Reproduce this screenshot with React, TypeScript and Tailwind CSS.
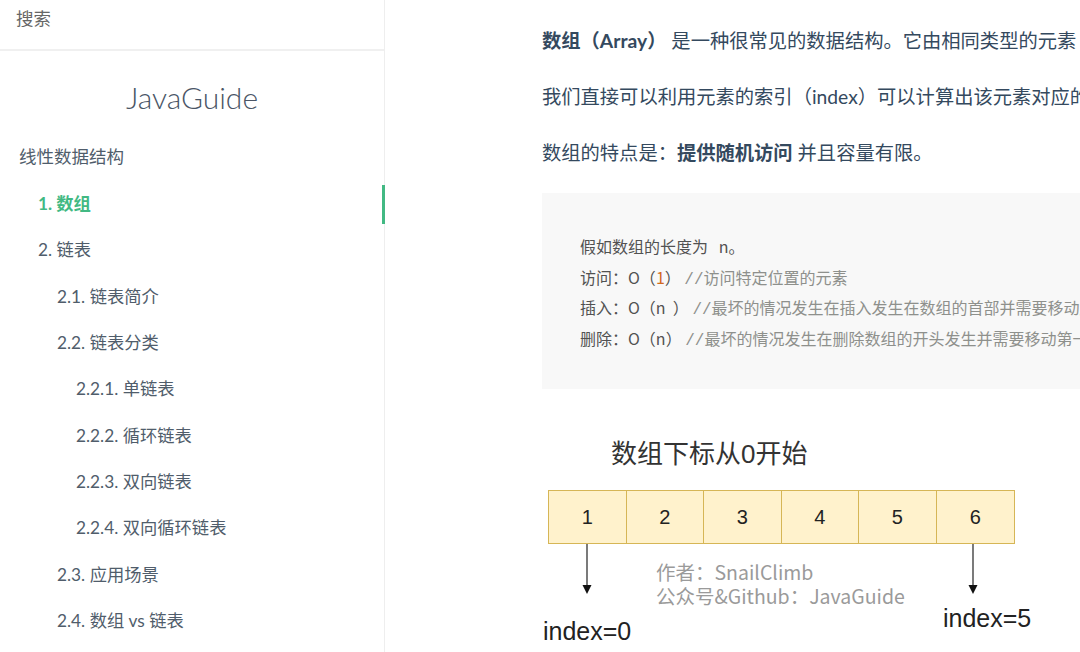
const sans = { fontFamily: 'Lato, "Noto Sans CJK SC", sans-serif' }
const mono = { fontFamily: '"Liberation Mono", monospace' }

const toc = [
  { label: '1. 数组', level: 1, active: true },
  { label: '2. 链表', level: 1 },
  { label: '2.1. 链表简介', level: 2 },
  { label: '2.2. 链表分类', level: 2 },
  { label: '2.2.1. 单链表', level: 3 },
  { label: '2.2.2. 循环链表', level: 3 },
  { label: '2.2.3. 双向链表', level: 3 },
  { label: '2.2.4. 双向循环链表', level: 3 },
  { label: '2.3. 应用场景', level: 2 },
  { label: '2.4. 数组 vs 链表', level: 2 },
]

const indent: Record<number, string> = {
  1: 'pl-[38px]',
  2: 'pl-[57px]',
  3: 'pl-[76px]',
}

function Sidebar() {
  return (
    <aside className="w-[385px] shrink-0 h-full border-r border-[#eeeeee] bg-white flex flex-col">
      <div className="h-[51px] border-b-2 border-[#f0f0f0] flex items-center pl-[16px] pb-[10px] text-[17.5px] text-[#666]">
        搜索
      </div>
      <h1 className="mt-[26px] text-center text-[30px] font-light text-[#4a5566] leading-[40px]">JavaGuide</h1>
      <div className="mt-[28px] pl-[19px] text-[17.5px] text-[#505d6b] leading-[24px]">线性数据结构</div>
      <ul className="mt-[12px]">
        {toc.map((item) => (
          <li
            key={item.label}
            className={`relative h-[46.3px] flex items-center text-[17.3px] ${indent[item.level]} ${
              item.active ? 'text-[#42b983] font-bold' : 'text-[#505d6b]'
            }`}
          >
            {item.label}
            {item.active && <span className="absolute right-[-1px] top-[4px] h-[39px] w-[3px] bg-[#42b983]" />}
          </li>
        ))}
      </ul>
    </aside>
  )
}

function Arrow() {
  return (
    <svg width="12" height="50" viewBox="0 0 12 50">
      <line x1="6" y1="0" x2="6" y2="42" stroke="#333" strokeWidth="1.3" />
      <path d="M1.5 41 L10.5 41 L6 50 Z" fill="#111" />
    </svg>
  )
}

function Comment({ children }: { children: string }) {
  return (
    <span className="text-[#8e908c]">
      <span style={mono}>//</span>
      {children}
    </span>
  )
}

function Diagram() {
  return (
    <div className="mt-[32px] w-[540px] flex flex-col" style={{ fontFamily: '"Liberation Sans", "Noto Sans CJK SC", sans-serif' }}>
      <div className="pl-[69px] pt-[17px] text-[26px] text-[#333] leading-[32px]">数组下标从0开始</div>
      <div className="ml-[6px] mt-[20px] flex h-[54px] w-fit border border-[#d6b656] bg-[#fff2cc]">
        {[1, 2, 3, 4, 5, 6].map((n) => (
          <div key={n} className="w-[77.5px] flex items-center justify-center border-r border-[#d6b656] last:border-r-0 text-[20px] text-[#222]">
            {n}
          </div>
        ))}
      </div>
      {/* arrows + labels drawn on the picture */}
      <div className="relative h-[110px]">
        <div className="absolute left-[39px] top-0"><Arrow /></div>
        <div className="absolute left-[425px] top-0"><Arrow /></div>
        <div
          className="absolute left-[114px] top-[16px] text-[19.5px] leading-[24px] text-[#9a9a9a]"
          style={{ fontFamily: '"Noto Sans CJK SC", sans-serif' }}
        >
          <div>作者：SnailClimb</div>
          <div>公众号&amp;Github：JavaGuide</div>
        </div>
        <div className="absolute left-[1px] top-[72px] text-[25px] text-[#222] leading-[30px]">index=0</div>
        <div className="absolute left-[401px] top-[59px] text-[25px] text-[#222] leading-[30px]">index=5</div>
      </div>
    </div>
  )
}

function Content() {
  return (
    <main className="flex-1 overflow-hidden bg-white">
      <div className="ml-[157px] w-[800px] text-[19.3px] text-[#34495e] whitespace-nowrap">
        <p className="mt-[28px] leading-[26px]">
          <strong className="font-bold">数组（Array）</strong> 是一种很常见的数据结构。它由相同类型的元素（element）组成，并且是使用一块连续的内存来存储。
        </p>
        <p className="mt-[30px] leading-[26px]">我们直接可以利用元素的索引（index）可以计算出该元素对应的存储地址。</p>
        <p className="mt-[30px] leading-[26px]">
          数组的特点是：<strong className="font-bold">提供随机访问</strong> 并且容量有限。
        </p>
        <pre
          className="mt-[27px] h-[196px] bg-[#f8f8f8] pt-[38px] pl-[38px] text-[16px] text-[#525252]"
          style={{ fontFamily: '"Noto Sans CJK SC", sans-serif' }}
        >
          <div className="h-[30.7px] leading-[30.7px]">
            假如数组的长度为&nbsp;&nbsp;&nbsp;n<span className="tracking-[4px]">。</span>
          </div>
          <div className="h-[30.7px] leading-[30.7px]">
            访问：O（<span className="text-[#d2691e]">1</span>）&nbsp;<Comment>访问特定位置的元素</Comment>
          </div>
          <div className="h-[30.7px] leading-[30.7px]">
            插入：O（n&nbsp;&nbsp;）&nbsp;<Comment>最坏的情况发生在插入发生在数组的首部并需要移动所有元素时</Comment>
          </div>
          <div className="h-[30.7px] leading-[30.7px]">
            删除：O（n）&nbsp;<Comment>最坏的情况发生在删除数组的开头发生并需要移动第一元素后面所有的元素时</Comment>
          </div>
        </pre>
        <Diagram />
      </div>
    </main>
  )
}

export default function App() {
  return (
    <div className="flex h-[652px] w-[1080px] overflow-hidden bg-white" style={sans}>
      <Sidebar />
      <Content />
    </div>
  )
}
